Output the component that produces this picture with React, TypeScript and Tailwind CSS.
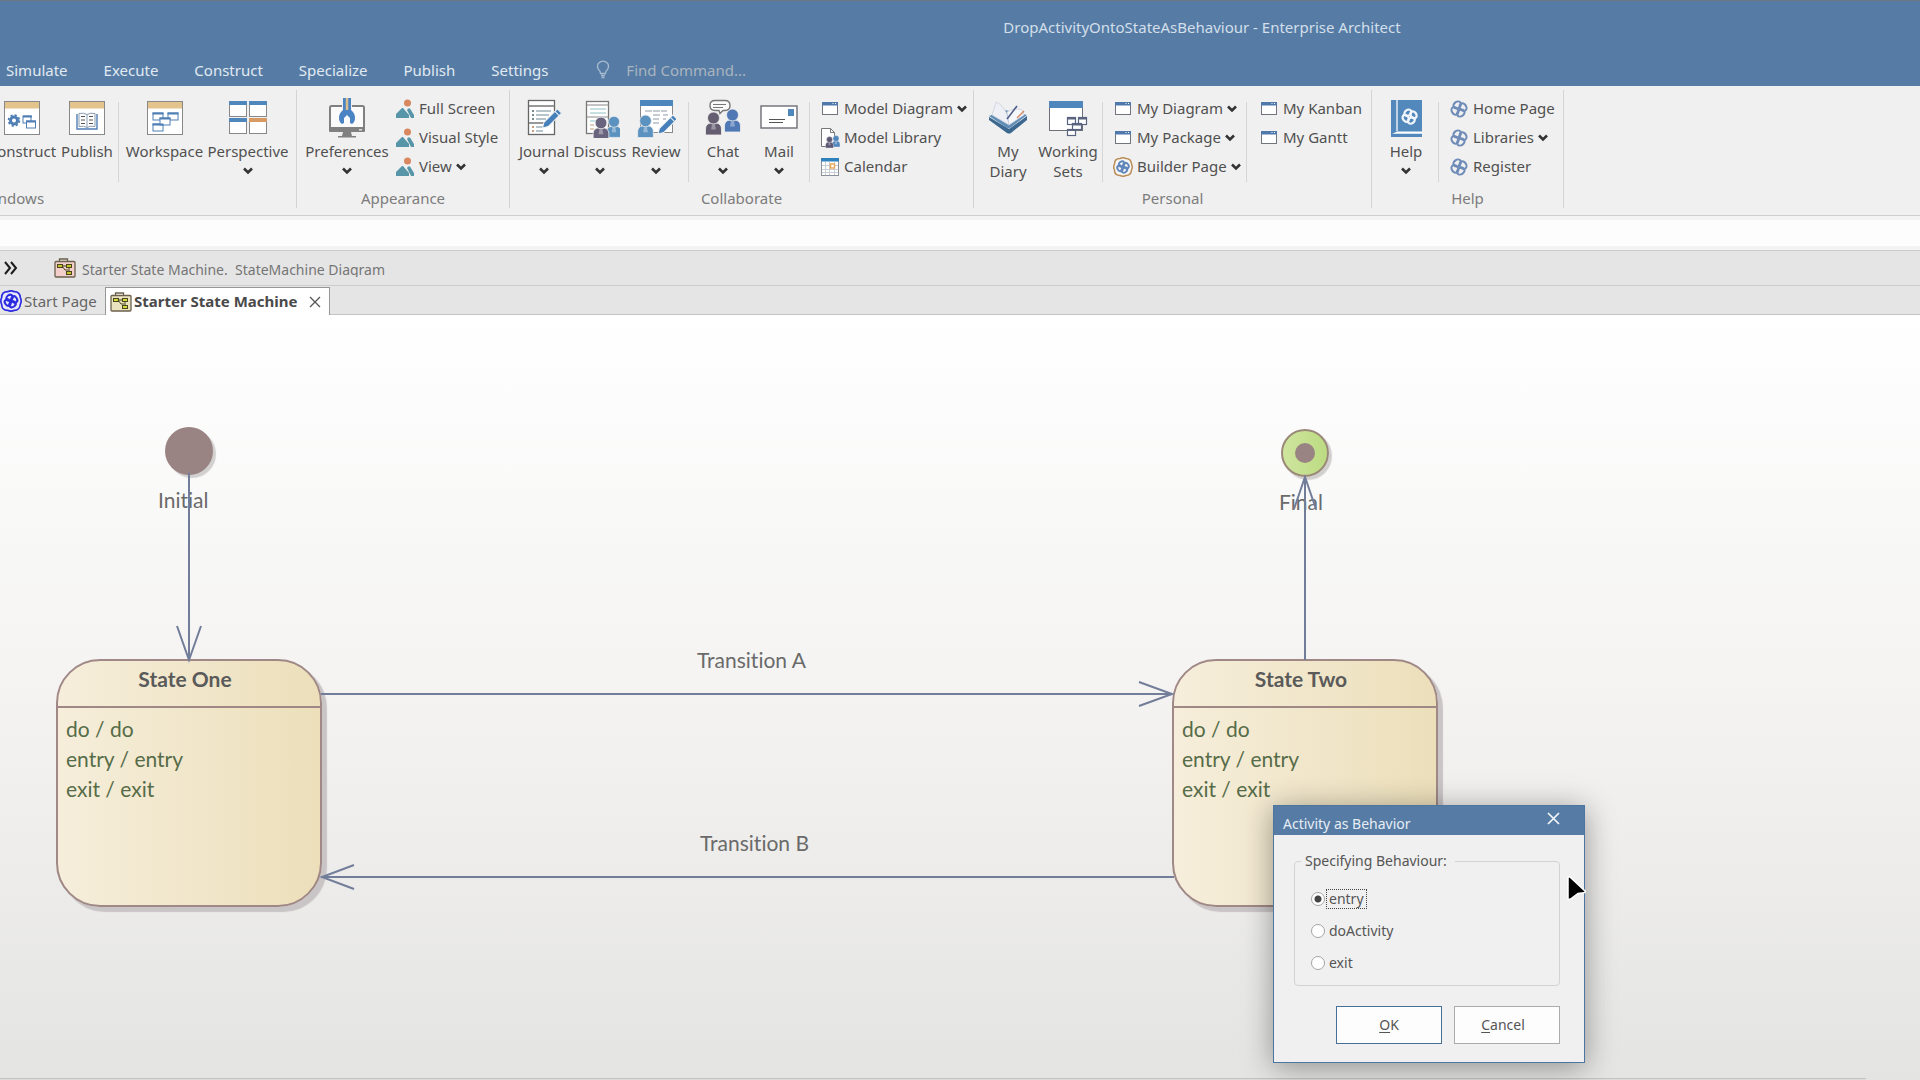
import React from "react";

type Kids = { children?: React.ReactNode };

/* ---------- shared glyphs ---------- */

function Chevron() {
  return (
    <svg width="10" height="8" viewBox="0 0 10 8" className="shrink-0" aria-hidden="true">
      <path d="M1 1.5 5 5.5 9 1.5" fill="none" stroke="#333" strokeWidth="2.6" />
    </svg>
  );
}

function KnotLoops({ r }: { r: number }) {
  return (
    <>
      <ellipse cx="8" cy="5.500" rx={r + 1} ry={r} transform="rotate(-35 8 5.500)" />
      <ellipse cx="14.500" cy="8" rx={r + 1} ry={r} transform="rotate(55 14.500 8)" />
      <ellipse cx="12" cy="14.500" rx={r + 1} ry={r} transform="rotate(-35 12 14.500)" />
      <ellipse cx="5.500" cy="12" rx={r + 1} ry={r} transform="rotate(55 5.500 12)" />
    </>
  );
}

function Knot({ size, stroke, ring, fill }: { size: number; stroke: string; ring?: string; fill?: string }) {
  return (
    <svg width={size} height={size} viewBox="0 0 20 20" className="shrink-0" aria-hidden="true">
      {ring && (
        <path
          d="M7 1.5Q10 0 13 1.5Q18 1.5 18.500 7Q20 10 18.500 13Q18 18.500 13 18.500Q10 20 7 18.500Q1.500 18.500 1.500 13Q0 10 1.500 7Q1.500 1.500 7 1.500Z"
          fill={fill || "none"}
          stroke={ring}
          strokeWidth="1.5"
        />
      )}
      <g
        transform={ring ? "translate(10 10) scale(.68) translate(-10 -10)" : undefined}
        fill="none"
        stroke={stroke}
        strokeWidth={ring ? 2.8 : 2.3}
      >
        <KnotLoops r={3.5} />
      </g>
    </svg>
  );
}

function Big({ children }: Kids) {
  return (
    <svg width="40" height="40" viewBox="0 0 40 40" className="shrink-0" aria-hidden="true">
      {children}
    </svg>
  );
}

function Small({ children }: Kids) {
  return (
    <svg width="20" height="20" viewBox="0 0 20 20" className="shrink-0" aria-hidden="true">
      {children}
    </svg>
  );
}

/* ---------- ribbon icons ---------- */

function TanWindow({ children }: Kids) {
  return (
    <Big>
      <rect x="2.500" y="3.500" width="35" height="33" fill="#fff" stroke="#888" />
      <rect x="3" y="4" width="34" height="6.500" fill="#e3c48d" />
      {children}
    </Big>
  );
}

const ConstructIcon = () => (
  <TanWindow>
    <circle cx="12" cy="22.500" r="3.500" fill="none" stroke="#4f7fb5" strokeWidth="3" />
    <circle cx="12" cy="22.500" r="5.400" fill="none" stroke="#4f7fb5" strokeWidth="1.800" strokeDasharray="2.200 2.040" />
    <rect x="21" y="18" width="8" height="7" fill="#fff" stroke="#4f7fb5" />
    <path d="M21 18.500h9" stroke="#4f7fb5" strokeWidth="2" />
    <rect x="24.500" y="23" width="9" height="7" fill="#fff" stroke="#4f7fb5" />
    <path d="M24 23.500h10" stroke="#4f7fb5" strokeWidth="2" />
  </TanWindow>
);

const PublishIcon = () => (
  <TanWindow>
    <path d="M10 16v15h20V16" fill="#fff" stroke="#4f7fb5" strokeWidth="1.400" />
    <path d="M12 15.500q5-1 8 1q3-2 8-1v13q-5-1-8 1q-3-2-8-1zM20 16.500v13" fill="#fff" stroke="#8a9db3" />
    <path d="M14 18.500h4M14 22h4M14 25.500h4M22 18.500h4M22 22h4M22 25.500h4" stroke="#555" />
  </TanWindow>
);

const WorkspaceIcon = () => (
  <TanWindow>
    <g fill="#fff" stroke="#4f7fb5">
      <rect x="8" y="15" width="10" height="7" />
      <rect x="23" y="15" width="10" height="7" />
      <rect x="8" y="26" width="10" height="7" />
      <rect x="15" y="20" width="10" height="7" />
    </g>
    <path d="M7.500 15.500h11M22.500 15.500h11M7.500 26.500h11M14.500 20.500h11" stroke="#4f7fb5" strokeWidth="2" />
  </TanWindow>
);

const PerspectiveIcon = () => (
  <Big>
    {[
      [1.5, 3.5, "#4f86bb"],
      [21.5, 3.5, "#4f86bb"],
      [1.5, 20.5, "#4f86bb"],
      [21.5, 20.5, "#d69a62"],
    ].map(([x, y, c]) => (
      <g key={`${x}-${y}`}>
        <rect x={x} y={y} width="17" height="15" fill="#fff" stroke="#888" />
        <rect x={Number(x) - 0.5} y={Number(y) - 0.5} width="18" height="4" fill={String(c)} />
      </g>
    ))}
  </Big>
);

const PreferencesIcon = () => (
  <Big>
    <rect x="3" y="8" width="34" height="24" rx="1.500" fill="#fbfbfb" stroke="#808080" strokeWidth="2" />
    <rect x="2" y="29" width="36" height="5" rx="1" fill="#808080" />
    <rect x="32" y="31" width="3" height="1.500" fill="#ddd" />
    <path d="M16 34h8l1 4h4v1.500H11V38h4z" fill="#808080" />
    <rect x="15" y="0" width="10" height="14" fill="#efefef" />
    <path d="M17.500 0v14M22.500 0v14" stroke="#4b84c4" strokeWidth="3" />
    <path d="M20 0v13" stroke="#d9bd8d" strokeWidth="2.500" />
    <path d="M16 12q-4 3-4 8q0 4 3 6l2-1v-5l3-3l3 3v5l2 1q3-2 3-6q0-5-4-8z" fill="#4b84c4" />
  </Big>
);

const Pencil = ({ x, y }: { x: number; y: number }) => (
  <g transform={`translate(${x} ${y}) rotate(45)`}>
    <path d="M-3 0h6v19l-3 5l-3-5z" fill="#4680bb" stroke="#f0f0f0" />
    <path d="M-3 3.500h6" stroke="#f0f0f0" />
  </g>
);

const Person = ({ x, y, s, c }: { x: number; y: number; s: number; c: string }) => (
  <g transform={`translate(${x} ${y}) scale(${s})`} fill={c} stroke="#f0f0f0" strokeWidth=".8">
    <path d="M-8 20v-6q0-5 5-6h6q5 1 5 6v6z" />
    <circle cx="0" cy="3" r="6" />
    <path d="M-1.500 9.500h3l1 5h-5z" fill="#fff" stroke="none" opacity=".35" />
  </g>
);

const JournalIcon = () => (
  <Big>
    <rect x="4.500" y="2.500" width="26" height="34" fill="#fff" stroke="#666" strokeWidth="1.300" />
    <path d="M5 8h26M5 25h20" stroke="#777" strokeWidth="1.300" />
    <path d="M12 13h15M12 17h13M12 21h10M12 29h7M12 33h7" stroke="#6b8a96" strokeWidth="1.200" />
    <path d="M8 13h2M8 17h2M8 21h2" stroke="#4d6670" strokeWidth="1.500" />
    <path d="M8 29h2M8 33h2" stroke="#bf7f52" strokeWidth="1.500" />
    <Pencil x={35.5} y={13} />
  </Big>
);

const DiscussIcon = () => (
  <Big>
    <rect x="6.500" y="3.500" width="22" height="32" fill="#fff" stroke="#777" strokeWidth="1.300" />
    <path d="M7 7h22M7 19h22" stroke="#888" />
    <path d="M10 11h16M10 15h16M10 23h10" stroke="#8fc0c4" />
    <path d="M10 27h4M10 31h4" stroke="#c79a77" />
    <Person x={34} y={21} s={0.92} c="#5b92bf" />
    <Person x={21} y={22} s={0.98} c="#6a637d" />
  </Big>
);

const ReviewIcon = () => (
  <Big>
    <rect x="4.500" y="2.500" width="32" height="32" fill="#fff" stroke="#888" />
    <rect x="4" y="2" width="33" height="6" fill="#4c86bc" />
    <path d="M9 13h22M17 17h7M27 17h5M17 21h6M27 21h3M17 25h6" stroke="#8d9aa5" strokeDasharray="7 1" />
    <Person x={9.5} y={20} s={0.98} c="#5b92bf" />
    <Pencil x={39} y={19} />
  </Big>
);

const ChatIcon = () => (
  <Big>
    <path d="M12 2.500h10q5 0 5 5q0 5-5 5h-2l-3 3l-1-3h-4q-5 0-5-5q0-5 5-5z" fill="#fafafa" stroke="#777" strokeWidth="1.400" />
    <path d="M10 6.500h13M10 9.500h10" stroke="#777" />
    <Person x={29.500} y={14} s={1} c="#4f78b5" />
    <Person x={10.500} y={17} s={1} c="#655d70" />
  </Big>
);

const MailIcon = () => (
  <Big>
    <rect x="2" y="8" width="36" height="22" fill="#fff" stroke="#6d6d75" strokeWidth="1.400" />
    <rect x="29" y="11" width="6" height="7" fill="#4f86bb" />
    <path d="M10 21.500h16M10 24.500h14" stroke="#555" />
  </Big>
);

const DiaryIcon = () => (
  <Big>
    <path d="M1 19 21 31 39 18v4L23 35q-2 1-4 0L1 22z" fill="#3c678e" />
    <path d="M1 18 17 12 39 17 22 30q-1.500 1-3 0z" fill="#5f8db6" />
    <path d="M4 17 8 4q7 3 11 12l2 11z" fill="#eef0f6" stroke="#c7ccd8" strokeWidth=".7" />
    <path d="M19 14q7-5 15-2l2 5L21 27z" fill="#f6f7fa" stroke="#c7ccd8" strokeWidth=".7" />
    <path d="M29 8 19 21" stroke="#4f5d8a" strokeWidth="1.600" />
    <path d="m36 13-7 7" stroke="#cf8b64" strokeWidth="1.500" />
  </Big>
);

const WorkingSetsIcon = () => (
  <Big>
    <rect x="1.500" y="3.500" width="33" height="29" fill="#fff" stroke="#6d7078" />
    <rect x="1" y="3" width="34" height="7" fill="#4f86bb" />
    <g fill="#fff" stroke="#5a6480" strokeWidth="1.200">
      <rect x="19.500" y="19.500" width="8" height="7" />
      <rect x="30.500" y="19.500" width="8" height="7" />
      <rect x="19.500" y="31.500" width="8" height="6" />
      <rect x="24.500" y="25.500" width="9" height="6" />
    </g>
    <path d="M19 20.500h9M30 20.500h9M19 32h9M24 26.500h10" stroke="#5a6480" strokeWidth="1.800" />
  </Big>
);

const HelpIcon = () => (
  <Big>
    <rect x="5" y="2" width="31" height="37" fill="#5288bb" />
    <path d="M11 2v31" stroke="#eef3f8" strokeWidth="1.400" />
    <path d="M6 36 11 33.500H36v2.300H8z" fill="#fff" />
    <g transform="translate(15 10) scale(.86)" fill="none" stroke="#f2f6fb" strokeWidth="2.600">
      <KnotLoops r={3.3} />
    </g>
  </Big>
);

const PictureIcon = () => (
  <Small>
    <circle cx="12.500" cy="4" r="3.500" fill="#d8875f" />
    <path d="M1 19v-4l6-6h1l6 7v3z" fill="#5796a8" />
    <path d="m12 11 1-1.500h2L19 16v3h-3z" fill="#5796a8" />
  </Small>
);

const WindowIcon = () => (
  <Small>
    <rect x="2.500" y="3.500" width="15" height="12" fill="#fff" stroke="#70757e" />
    <rect x="2" y="3" width="16" height="3.500" fill="#4f78ab" />
    <path d="M12.500 4.500h1M15 4.500h1" stroke="#fff" />
  </Small>
);

const LibraryIcon = () => (
  <Small>
    <path d="M1.500 .5h9l4 4v14h-13z" fill="#fff" stroke="#777" />
    <path d="M10.500 .5v4h4" fill="none" stroke="#777" />
    <Person x={16} y={9} s={0.5} c="#4f86bb" />
    <Person x={9.5} y={10} s={0.5} c="#5d5873" />
  </Small>
);

const CalendarIcon = () => (
  <Small>
    <rect x="1.500" y="1.500" width="17" height="17" fill="#fff" stroke="#8d9299" />
    <rect x="1" y="1" width="18" height="3.500" fill="#2f81bb" />
    <path d="M5.500 5v13M9.500 5v13M14.500 5v13M2 8.500h16M2 12.500h16M2 15.500h16" stroke="#c9ced4" />
    <rect x="10.500" y="7" width="4" height="4" fill="#fff" stroke="#e8a552" strokeWidth="1.400" />
  </Small>
);

function CaseIcon({ back, box }: { back: string; box: string }) {
  return (
    <svg width="22" height="20" viewBox="0 0 22 20" className="shrink-0" aria-hidden="true">
      <path d="M5.500 3.500v-2.500h8v2.500" fill="none" stroke="#6b604c" strokeWidth="1.300" />
      <rect x="1" y="3.500" width="20" height="15.500" rx="1" fill={back} stroke="#6b604c" strokeWidth="1.300" />
      <g fill={box} stroke="#4a461c">
        <rect x="3.500" y="6.500" width="5" height="3" />
        <rect x="12.500" y="6.500" width="5" height="3" />
        <rect x="12.500" y="13.500" width="5" height="3" />
      </g>
      <path d="M8.500 8h4M15 9.500v4M8 8l3 4h3" fill="none" stroke="#4a461c" />
    </svg>
  );
}

/* ---------- ribbon building blocks ---------- */

function Group({ label, className, labelClass, children }: Kids & { label: string; className?: string; labelClass?: string }) {
  return (
    <section aria-label={label} className={`flex shrink-0 flex-col border-r border-[#d4d4d4] ${className || ""}`}>
      <div className="flex h-[98px] items-start pt-2">{children}</div>
      <div className={`text-center leading-5 text-[#7c7c7c] ${labelClass || ""}`}>{label}</div>
    </section>
  );
}

const Divider = () => <div className="mt-1 h-20 w-px shrink-0 bg-[#d6d6d6]" />;

function BigButton({ icon, label, menu, className }: { icon: React.ReactNode; label: React.ReactNode; menu?: boolean; className: string }) {
  return (
    <button type="button" className={`flex shrink-0 flex-col items-center whitespace-nowrap ${className}`}>
      {icon}
      <span className="mt-[3px] leading-5">{label}</span>
      {menu && (
        <span className="mt-1.5">
          <Chevron />
        </span>
      )}
    </button>
  );
}

function SmallButton({ icon, label, menu }: { icon: React.ReactNode; label: string; menu?: boolean }) {
  return (
    <button type="button" className="flex h-[29px] items-center whitespace-nowrap">
      <span className="mr-1 flex w-5 justify-center">{icon}</span>
      {label}
      {menu && (
        <span className="ml-1">
          <Chevron />
        </span>
      )}
    </button>
  );
}

const SmallColumn = ({ className, children }: Kids & { className: string }) => (
  <div className={`-mt-1 flex shrink-0 flex-col items-start ${className}`}>{children}</div>
);

const blueKnot = <Knot size={18} stroke="#6f8cb8" />;

function Ribbon() {
  return (
    <div className="flex h-[130px] items-start overflow-hidden border-b border-[#cfcfcf] bg-[#f0f0f0] pt-1 pb-1 text-[15px] text-[#505050]">
      <Group label="Windows" className="-ml-4 w-[313px]" labelClass="-ml-1 w-[60px]">
        <BigButton icon={<ConstructIcon />} label="Construct" className="w-[76px]" />
        <BigButton icon={<PublishIcon />} label="Publish" className="mr-1 w-[54px]" />
        <Divider />
        <BigButton icon={<WorkspaceIcon />} label="Workspace" className="ml-1 w-[83px]" />
        <BigButton icon={<PerspectiveIcon />} label="Perspective" menu className="w-[84px]" />
      </Group>
      <Group label="Appearance" className="w-[213px]">
        <BigButton icon={<PreferencesIcon />} label="Preferences" menu className="mr-0.5 ml-1 w-[92px]" />
        <SmallColumn className="">
          <SmallButton icon={<PictureIcon />} label="Full Screen" />
          <SmallButton icon={<PictureIcon />} label="Visual Style" />
          <SmallButton icon={<PictureIcon />} label="View" menu />
        </SmallColumn>
      </Group>
      <Group label="Collaborate" className="w-[464px]">
        <BigButton icon={<JournalIcon />} label="Journal" menu className="ml-1.5 w-14" />
        <BigButton icon={<DiscussIcon />} label="Discuss" menu className="w-14" />
        <BigButton icon={<ReviewIcon />} label="Review" menu className="mr-1 w-14" />
        <Divider />
        <BigButton icon={<ChatIcon />} label="Chat" menu className="ml-1.5 w-14" />
        <BigButton icon={<MailIcon />} label="Mail" menu className="mr-0.5 w-14" />
        <Divider />
        <SmallColumn className="ml-2.5">
          <SmallButton icon={<WindowIcon />} label="Model Diagram" menu />
          <SmallButton icon={<LibraryIcon />} label="Model Library" />
          <SmallButton icon={<CalendarIcon />} label="Calendar" />
        </SmallColumn>
      </Group>
      <Group label="Personal" className="w-[398px]">
        <BigButton icon={<DiaryIcon />} label={<>My<br />Diary</>} className="ml-1.5 w-14" />
        <BigButton icon={<WorkingSetsIcon />} label={<>Working<br />Sets</>} className="mr-0.5 w-16" />
        <Divider />
        <SmallColumn className="ml-2.5 w-[133px]">
          <SmallButton icon={<WindowIcon />} label="My Diagram" menu />
          <SmallButton icon={<WindowIcon />} label="My Package" menu />
          <SmallButton icon={<Knot size={20} stroke="#5f86bb" ring="#b98d55" fill="#f6f6f6" />} label="Builder Page" menu />
        </SmallColumn>
        <Divider />
        <SmallColumn className="ml-3">
          <SmallButton icon={<WindowIcon />} label="My Kanban" />
          <SmallButton icon={<WindowIcon />} label="My Gantt" />
        </SmallColumn>
      </Group>
      <Group label="Help" className="w-[192px]">
        <BigButton icon={<HelpIcon />} label="Help" menu className="ml-1.5 mr-1 w-14" />
        <Divider />
        <SmallColumn className="ml-2.5">
          <SmallButton icon={blueKnot} label="Home Page" />
          <SmallButton icon={blueKnot} label="Libraries" menu />
          <SmallButton icon={blueKnot} label="Register" />
        </SmallColumn>
      </Group>
    </div>
  );
}

/* ---------- title and menu ---------- */

function Header() {
  return (
    <header className="flex h-[86px] flex-col border-t border-[#6d7883] bg-[#567ca5] text-[15px] text-[#e1eaf2]">
      <div className="flex h-[54px] justify-center pt-4 pl-[484px] leading-5 text-[#d3dfea]">
        DropActivityOntoStateAsBehaviour - Enterprise Architect
      </div>
      <nav className="flex h-8 items-center gap-9 pl-1.5">
        {["Simulate", "Execute", "Construct", "Specialize", "Publish", "Settings"].map((t) => (
          <button key={t} type="button">
            {t}
          </button>
        ))}
        <label className="flex items-center gap-4 pl-3">
          <svg width="14" height="20" viewBox="0 0 14 20" aria-hidden="true">
            <path d="M4.500 13.500Q4.500 11 2.500 9.500Q0.500 6 2.500 3.200Q7-1 11.500 3.200Q13.500 6 11.500 9.500Q9.500 11 9.500 13.500zM5 15.500h4M5.500 17.500h3" fill="none" stroke="#a9bbd0" strokeWidth="1.300" />
          </svg>
          <input
            aria-label="Find Command"
            placeholder="Find Command..."
            className="w-40 bg-transparent leading-5 outline-none placeholder:text-[#a9b4bf]"
          />
        </label>
      </nav>
    </header>
  );
}

function DocumentBars() {
  return (
    <>
      <div className="flex h-9 items-center border-y border-[#cccccc] bg-[#e5e5e5] text-sm text-[#757575]">
        <button type="button" aria-label="Expand" className="ml-1 w-[50px]">
          <svg width="14" height="14" viewBox="0 0 14 14" aria-hidden="true">
            <path d="m1 1 5 6-5 6M7 1l5 6-5 6" fill="none" stroke="#1c1c1c" strokeWidth="2" />
          </svg>
        </button>
        <CaseIcon back="#f3cfcc" box="#c9c42c" />
        <span className="mt-0.5 ml-1.5 h-4 overflow-hidden whitespace-pre leading-[18px]">Starter State Machine.  StateMachine Diagram</span>
      </div>
      <div className="flex h-[29px] items-end border-b border-[#c4c4c4] bg-[#e5e5e5] pt-0.5 text-[15px] text-[#666]">
        <button type="button" className="flex h-full w-[105px] items-center gap-0.5 whitespace-nowrap">
          <Knot size={22} stroke="#2b2be0" ring="#2b2be0" fill="#e9e9fb" />
          Start Page
        </button>
        <div className="-mb-px flex h-7 items-center border border-b-0 border-[#969696] bg-white pr-2 pl-1 font-bold text-[#4a4a4a]">
          <CaseIcon back="#ebe2c0" box="#d6d83e" />
          <span className="ml-0.5">Starter State Machine</span>
          <button type="button" aria-label="Close tab" className="ml-3">
            <svg width="12" height="12" viewBox="0 0 12 12" aria-hidden="true">
              <path d="m1 1 10 10M11 1 1 11" stroke="#555" strokeWidth="1.300" />
            </svg>
          </button>
        </div>
      </div>
    </>
  );
}

/* ---------- diagram (coordinates are relative to the canvas) ---------- */

function StateNode({ name, place }: { name: string; place: string }) {
  return (
    <div
      className={`absolute h-[248px] w-[266px] rounded-[44px] border-2 border-[#9f8886] bg-linear-to-r from-[#f6eedb] to-[#ecdfba] shadow-[5px_5px_1px_#c9c4c5] ${place}`}
    >
      <div className="h-[47px] border-b-2 border-[#9f8886] pt-1.5 pr-2 text-center font-bold leading-6 text-[#5a5a5a]">
        {name}
      </div>
      <div className="pt-1.5 pl-2 leading-[30px] text-[#566c48]">
        <div>do / do</div>
        <div>entry / entry</div>
        <div>exit / exit</div>
      </div>
    </div>
  );
}

function Diagram() {
  return (
    <>
      <div className="absolute top-[112px] left-[165px] size-12 rounded-full bg-[#9a8383] shadow-[3px_3px_1px_#d2cfcf]" />
      <div className="absolute top-[114px] left-[1281px] flex size-12 items-center justify-center rounded-full border-2 border-[#9a8979] bg-linear-to-r from-[#cfe59e] to-[#bcdb82] shadow-[3px_3px_1px_#d2cfcf]">
        <div className="size-5 rounded-full bg-[#9a8383]" />
      </div>
      <div className="absolute top-[173px] left-[158px] leading-6">Initial</div>
      <div className="absolute top-[175px] left-[1279px] leading-6">Final</div>
      <div className="absolute top-[333px] left-[697px] leading-6">Transition A</div>
      <div className="absolute top-[516px] left-[700px] leading-6">Transition B</div>
      <StateNode name="State One" place="top-[344px] left-[56px]" />
      <StateNode name="State Two" place="top-[344px] left-[1172px]" />
      <svg className="absolute top-0 left-0" width="1440" height="600" viewBox="0 0 1440 600" aria-hidden="true">
        <g fill="none" stroke="#727d99" strokeWidth="2">
          <path d="M189 158v187M177 311l12 34 12-34" />
          <path d="M1305 345V162M1294 194l11-32 11 32" />
          <path d="M321 379h851M1139 367l33 12-33 12" />
          <path d="M1174 562H322M354 550l-32 12 32 12" />
        </g>
      </svg>
    </>
  );
}

function Choice({ label, checked }: { label: string; checked?: boolean }) {
  return (
    <label className="flex h-8 items-center">
      <input
        type="radio"
        name="behaviour"
        defaultChecked={checked}
        className="size-3.5 appearance-none rounded-full border border-[#a5a5a5] bg-white checked:bg-[radial-gradient(circle,#444_3px,#fff_4px)]"
      />
      <span className={checked ? "ml-px border border-dotted border-[#444] px-0.5 leading-[18px]" : "ml-px border border-transparent px-0.5 leading-[18px]"}>
        {label}
      </span>
    </label>
  );
}

function BehaviorDialog() {
  return (
    <div
      role="dialog"
      aria-label="Activity as Behavior"
      className="absolute top-[490px] left-[1273px] w-[312px] border border-[#4d759f] bg-[#f0f0f0] pb-[18px] text-sm text-[#555] shadow-[0_4px_28px_rgba(0,0,0,0.38)] [font-family:'Noto_Sans',sans-serif]"
    >
      <div className="flex h-[29px] items-start justify-between bg-[#567ca5] pr-6 pl-[9px] text-[#e6edf4]">
        <span className="pt-2 leading-5">Activity as Behavior</span>
        <button type="button" aria-label="Close" className="pt-1.5">
          <svg width="13" height="13" viewBox="0 0 13 13" aria-hidden="true">
            <path d="m1 1 11 11M12 1 1 12" stroke="#f4f7fa" strokeWidth="1.700" />
          </svg>
        </button>
      </div>
      <fieldset className="mt-4 mr-6 mb-5 ml-5 rounded-[4px] border border-[#d3d3d3] px-4 pt-3 pb-1.5">
        <legend className="-ml-2.5 pr-2 pl-1 leading-5">Specifying Behaviour:</legend>
        <Choice label="entry" checked />
        <Choice label="doActivity" />
        <Choice label="exit" />
      </fieldset>
      <div className="flex justify-end gap-3 pr-6">
        <button type="button" className="h-[38px] w-[106px] border border-[#476f98] bg-[#fdfdfd]">
          <u className="underline-offset-2">O</u>K
        </button>
        <button type="button" className="h-[38px] w-[106px] border border-[#ababab] bg-[#fdfdfd] pr-2">
          <u className="underline-offset-2">C</u>ancel
        </button>
      </div>
      <svg className="absolute top-[67px] left-[291px]" width="24" height="32" viewBox="0 0 24 32" aria-hidden="true">
        <path d="M3 4.500q1-1.500 2.500 0L20 18q1 1.500-1 1.700l-6 .8L5.500 26q-2.500 1.500-2.500-1z" fill="#000" stroke="#fff" strokeWidth="1.500" />
      </svg>
    </div>
  );
}

export default function App() {
  return (
    <div className="flex min-h-screen flex-col overflow-hidden bg-white [font-family:'Noto_Sans',sans-serif]">
      <Header />
      <Ribbon />
      <div className="h-[34px] border-y-4 border-[#f3f3f3] bg-[#fdfdfd]" />
      <DocumentBars />
      <main className="relative flex flex-1 flex-col justify-end overflow-hidden bg-linear-to-b from-white via-[#f4f3f2] to-[#e4e4e2] text-[21px] text-[#6a6a6a] [font-family:Lato,sans-serif] [font-variant-ligatures:none]">
        <Diagram />
        <div className="mr-[54px] h-0.5 border-t border-[#c3c3c3] bg-[#dcdcdc]" />
        <BehaviorDialog />
      </main>
    </div>
  );
}
